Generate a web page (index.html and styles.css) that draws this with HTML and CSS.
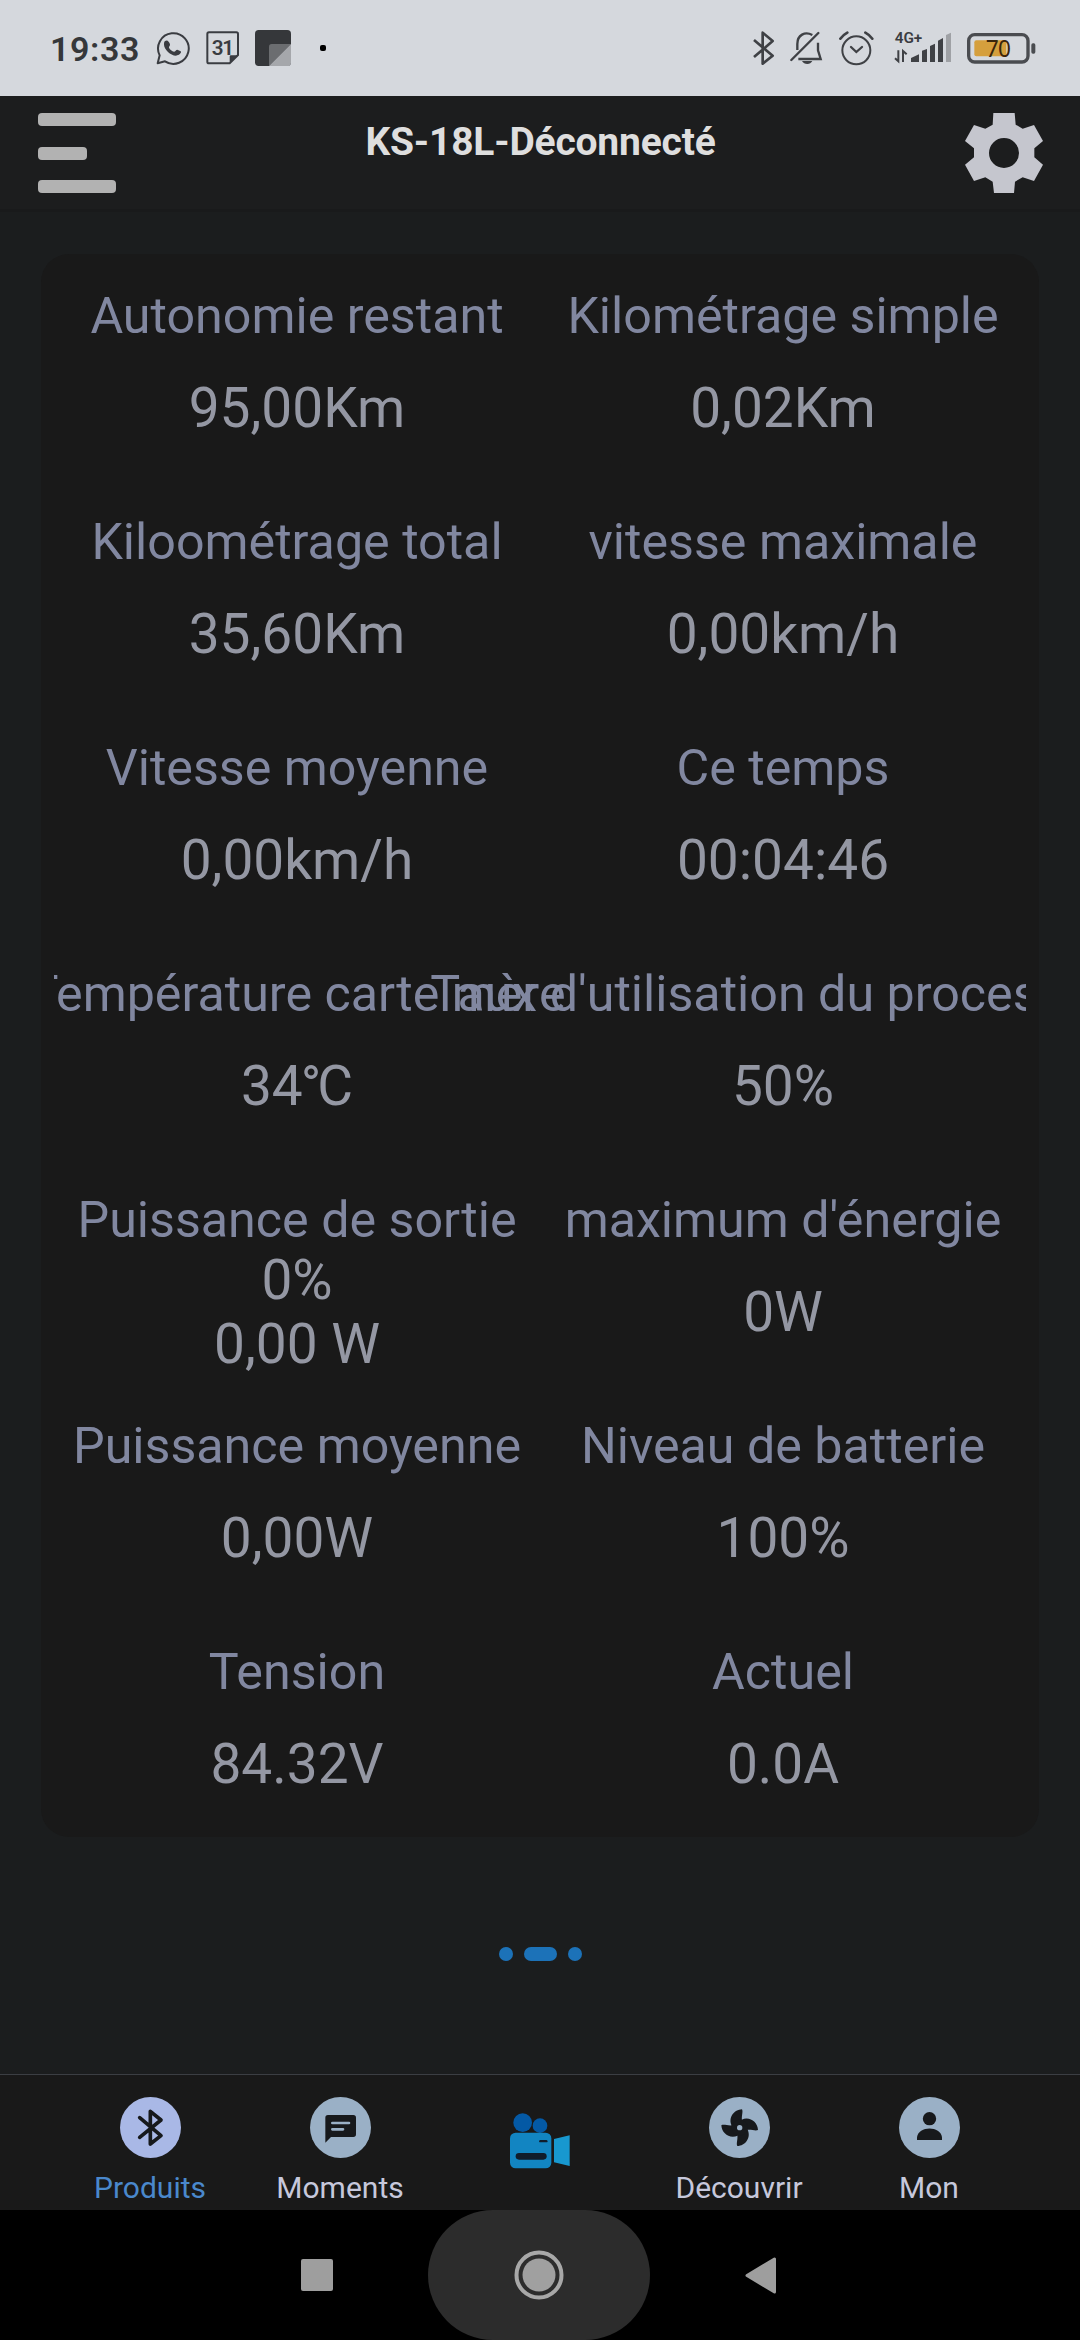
FILE: index.html
```html
<!DOCTYPE html>
<html lang="fr">
<head>
    <meta charset="UTF-8">
    <meta name="viewport" content="width=device-width, initial-scale=1.0">
    <title>KS-18L</title>
    <link rel="stylesheet" href="styles.css">
</head>
<body>
    <!-- Status bar -->
    <div class="status-bar">
        <div class="status-left">
            <span class="clock">19:33</span>
            <svg class="whatsapp" width="34" height="35" viewBox="469 93 102 105">
                <path d="M474 190 L480 166 A46 46 0 1 1 496 184 Z" fill="none" stroke="#3a3c41" stroke-width="6" stroke-linejoin="round"/>
                <path d="M496 123 C503 118 508 124 511 133 C512 138 507 140 508 143 C511 149 517 153 523 155 C527 155 529 149 533 149 L543 154 C547 158 539 166 529 167 C512 166 494 149 493 134 C493 129 493 126 496 123 Z" fill="#3a3c41"/>
            </svg>
            <svg class="calendar" width="34" height="35" viewBox="619 93 102 105">
                <path d="M628 97 H710 Q715 97 715 102 V165 L690 190 H628 Q623 190 623 185 V102 Q623 97 628 97 Z" fill="none" stroke="#3a3c41" stroke-width="6"/>
                <path d="M690 190 V170 Q690 166 694 166 H714 Z" fill="#3a3c41"/>
                <text x="668" y="164" class="calendar-day">31</text>
            </svg>
            <svg class="note" width="36" height="36" viewBox="0 0 108 108">
                <rect width="108" height="108" rx="11" fill="#35373a"/>
                <path d="M42 108 V50 Q42 42 50 42 H108 Z" fill="#6b6d70"/>
                <path d="M42 108 L108 42 V98 Q108 108 98 108 Z" fill="#a5a7ab"/>
            </svg>
            <span class="more-dot"></span>
        </div>
        <div class="status-right">
            <svg width="22" height="35" viewBox="99 92 66 105">
                <path d="M102 119 L158 166 L128 190 V97 L158 122 L102 170" fill="none" stroke="#3f4145" stroke-width="8" stroke-linejoin="round"/>
            </svg>
            <svg class="bell" width="33" height="34" viewBox="210 93 99 102">
                <path d="M277 105 C255 93 232 105 232 132 V150 M294 128 V151 L302 177 H235" fill="none" stroke="#3f4145" stroke-width="7"/>
                <path d="M214 180 L295 99" stroke="#3f4145" stroke-width="7" stroke-linecap="round"/>
                <path d="M246 183 H277 Q272 192 262 192 Q251 192 246 183 Z" fill="#3f4145"/>
            </svg>
            <svg class="alarm" width="35" height="35" viewBox="356 92 105 105">
                <circle cx="408" cy="150" r="42" fill="none" stroke="#3f4145" stroke-width="6"/>
                <path d="M392 140 L408 155 L425 140" fill="none" stroke="#3f4145" stroke-width="7" stroke-linecap="round"/>
                <path d="M360 115 Q368 104 381 97 M435 97 Q448 104 456 115" fill="none" stroke="#3f4145" stroke-width="8" stroke-linecap="round"/>
            </svg>
            <svg class="signal" width="58" height="34" viewBox="522 90 174 102">
                <text x="524" y="129" class="network">4G+</text>
                <path d="M535 151 V184 L525 175 M549 186 V153 L560 163" fill="none" stroke="#3f4145" stroke-width="6"/>
                <path d="M573 174 L597 163 V186 H573 Z M606 152 L621 147 V186 H606 Z M630 138 L645 131 V186 H630 Z M654 122 L669 114 V186 H654 Z" fill="#3f4145"/>
                <path d="M678 105 L693 98 V186 H678 Z" fill="#9fa1a5"/>
            </svg>
            <svg class="battery" width="69" height="31" viewBox="740 98 207 93">
                <rect x="745" y="103" width="178" height="82" rx="18" fill="none" stroke="#4a4c50" stroke-width="10"/>
                <rect x="762" y="120" width="96" height="48" rx="6" fill="#d59f3d"/>
                <rect x="933" y="129" width="12" height="31" rx="5" fill="#4a4c50"/>
                <text x="833" y="170" class="battery-level">70</text>
            </svg>
        </div>
    </div>

    <!-- Header -->
    <div class="header">
        <div class="menu">
            <span></span>
            <span class="short"></span>
            <span></span>
        </div>
        <h1>KS-18L-Déconnecté</h1>
        <svg width="78" height="80" viewBox="735 339 234 240">
            <path fill="#c5c6ce" fill-rule="evenodd" d="M820 339 H884 L887 374 L908 386 L942 375 L969 423 L943 445 V472 L969 494 L942 543 L908 532 L885 545 L882 579 H822 L818 545 L796 532 L762 543 L735 494 L762 472 V445 L735 423 L762 375 L796 386 L818 374 Z M852 414 A45 45 0 1 0 852 504 A45 45 0 1 0 852 414 Z"/>
        </svg>
    </div>

    <!-- Ride data -->
    <div class="content">
        <div class="card">
            <div class="stats">
                <div class="stat"><div class="label">Autonomie restant</div><div class="value">95,00Km</div></div>
                <div class="stat"><div class="label">Kilométrage simple</div><div class="value">0,02Km</div></div>
                <div class="stat"><div class="label">Kiloométrage total</div><div class="value">35,60Km</div></div>
                <div class="stat"><div class="label">vitesse maximale</div><div class="value">0,00km/h</div></div>
                <div class="stat"><div class="label">Vitesse moyenne</div><div class="value">0,00km/h</div></div>
                <div class="stat"><div class="label">Ce temps</div><div class="value">00:04:46</div></div>
                <div class="stat"><div class="label">Température carte mère</div><div class="value">34<span class="degree">°</span>C</div></div>
                <div class="stat"><div class="label">Taux d'utilisation du processeur</div><div class="value">50%</div></div>
                <div class="stat"><div class="label">Puissance de sortie</div><div class="value">0%<br>0,00 W</div></div>
                <div class="stat"><div class="label">maximum d'énergie</div><div class="value">0W</div></div>
                <div class="stat"><div class="label">Puissance moyenne</div><div class="value">0,00W</div></div>
                <div class="stat"><div class="label">Niveau de batterie</div><div class="value">100%</div></div>
                <div class="stat"><div class="label">Tension</div><div class="value">84.32V</div></div>
                <div class="stat"><div class="label">Actuel</div><div class="value">0.0A</div></div>
            </div>
        </div>
        <div class="pager">
            <span></span>
            <span class="current"></span>
            <span></span>
        </div>
    </div>

    <!-- Tabs -->
    <div class="tabs">
        <div class="tab active">
            <svg width="61" height="61" viewBox="0 0 183 183">
                <circle cx="91.5" cy="91.5" r="91.5" fill="#a9b8e6"/>
                <path d="M59 62 L123 116 L91 141 V43 L123 69 L59 121" fill="none" stroke="#17191c" stroke-width="11" stroke-linejoin="round" stroke-linecap="round"/>
            </svg>
            <span>Produits</span>
        </div>
        <div class="tab">
            <svg width="61" height="61" viewBox="0 0 183 183">
                <circle cx="91.5" cy="91.5" r="91.5" fill="#9ab0c6"/>
                <path d="M54 54 H130 Q138 54 138 62 V112 Q138 120 130 120 H63 L46 137 V62 Q46 54 54 54 Z" fill="#17191c"/>
                <path d="M67 78 H117 M67 97 H99" stroke="#9ab0c6" stroke-width="8" stroke-linecap="round"/>
            </svg>
            <span>Moments</span>
        </div>
        <div class="tab">
            <svg class="camera" width="60" height="56" viewBox="0 0 180 168">
                <circle cx="38" cy="29" r="28" fill="#0459a5"/>
                <circle cx="90" cy="38" r="22" fill="#0459a5"/>
                <rect x="0" y="59" width="124" height="107" rx="17" fill="#1285c2"/>
                <path d="M132 78 L179 67 V159 L132 148 Z" fill="#1898cf"/>
                <path d="M91 84.5 H109" stroke="#101d2c" stroke-width="7" stroke-linecap="round"/>
                <path d="M27 130 H100" stroke="#101d2c" stroke-width="20" stroke-linecap="round"/>
            </svg>
        </div>
        <div class="tab">
            <svg width="61" height="61" viewBox="0 0 183 183">
                <circle cx="91.5" cy="91.5" r="91.5" fill="#9ab0c6"/>
                <g fill="#17191c">
                    <path d="M91 92 L68 86 C57 62 75 38 99 37 C103 44 97 57 99 70 Z"/>
                    <path d="M91 92 L68 86 C57 62 75 38 99 37 C103 44 97 57 99 70 Z" transform="rotate(90 92 92)"/>
                    <path d="M91 92 L68 86 C57 62 75 38 99 37 C103 44 97 57 99 70 Z" transform="rotate(180 92 92)"/>
                    <path d="M91 92 L68 86 C57 62 75 38 99 37 C103 44 97 57 99 70 Z" transform="rotate(270 92 92)"/>
                    <circle cx="92" cy="92" r="24"/>
                </g>
                <circle cx="92" cy="92" r="8" fill="#9ab0c6"/>
            </svg>
            <span>Découvrir</span>
        </div>
        <div class="tab">
            <svg width="61" height="61" viewBox="0 0 183 183">
                <circle cx="91.5" cy="91.5" r="91.5" fill="#9ab0c6"/>
                <circle cx="91.5" cy="65" r="20" fill="#17191c"/>
                <path d="M54 129 V121 C58 86 125 86 129 121 V129 Z" fill="#17191c"/>
            </svg>
            <span>Mon</span>
        </div>
    </div>

    <!-- Android navigation -->
    <div class="nav-bar">
        <div class="nav-item"><span class="recents"></span></div>
        <div class="home">
            <svg width="50" height="50" viewBox="0 0 50 50">
                <circle cx="25" cy="25" r="22.5" fill="none" stroke="#a8a8a8" stroke-width="4"/>
                <circle cx="25" cy="25" r="16.5" fill="#a0a0a0"/>
            </svg>
        </div>
        <div class="nav-item">
            <svg width="32" height="37" viewBox="0 0 32 37">
                <path d="M2 18.5 L29.5 2 V35 Z" fill="#9e9e9e" stroke="#9e9e9e" stroke-width="3" stroke-linejoin="round"/>
            </svg>
        </div>
    </div>
</body>
</html>
```
FILE: styles.css
```css
* {
    box-sizing: border-box;
}

body {
    margin: 0;
    width: 1080px;
    height: 2340px;
    display: flex;
    flex-direction: column;
    overflow: hidden;
    background: #1b1d1e;
    font-family: Roboto, "Noto Sans", sans-serif;
}

svg {
    display: block;
    flex-shrink: 0;
}

/* Status bar */
.status-bar {
    height: 96px;
    flex-shrink: 0;
    padding: 0 44px 0 50px;
    display: flex;
    align-items: center;
    justify-content: space-between;
    background: #d5d8dd;
}

.status-left,
.status-right {
    display: flex;
    align-items: center;
}

.clock {
    width: 106px;
    padding-top: 1px;
    font-size: 34px;
    font-weight: 600;
    line-height: 40px;
    letter-spacing: 0.6px;
    color: #35373a;
}

.calendar {
    margin-left: 16px;
}

.note {
    margin-left: 15px;
}

.more-dot {
    width: 6px;
    height: 6px;
    margin-left: 29px;
    border-radius: 2px;
    background: #000;
}

.calendar-day {
    font-size: 62px;
    font-weight: 600;
    text-anchor: middle;
    letter-spacing: -4px;
    fill: #3a3c41;
}

.network {
    font-size: 46px;
    font-weight: 600;
    fill: #3a3c41;
}

.battery-level {
    font-family: "Noto Sans", sans-serif;
    font-size: 68px;
    font-weight: 400;
    text-anchor: middle;
    letter-spacing: -2px;
    fill: #3a250c;
}

.bell {
    margin-left: 15px;
}

.alarm {
    margin-left: 16px;
}

.signal {
    margin-left: 20px;
    margin-top: -2px;
}

.battery {
    margin-left: 15px;
}

/* Header */
.header {
    height: 116px;
    flex-shrink: 0;
    padding: 17px 37px 0 38px;
    display: flex;
    justify-content: space-between;
    border-bottom: 3px solid #191a1b;
    background: #1c1d1e;
}

.header h1 {
    margin: 0;
    padding-top: 6px;
    font-size: 39px;
    font-weight: 700;
    line-height: 46px;
    letter-spacing: -0.2px;
    color: #dedede;
}

.menu {
    width: 78px;
    height: 80px;
    display: flex;
    flex-direction: column;
    justify-content: space-between;
}

.menu span {
    height: 13px;
    border-radius: 4px;
    background: #b2b2b2;
}

.menu .short {
    width: 49px;
}

/* Ride data */
.content {
    flex: 1;
    padding: 42px 41px 0;
}

.card {
    height: 1583px;
    padding: 0 13px;
    border-radius: 28px;
    background: #191919;
}

.stats {
    display: grid;
    grid-template-columns: 1fr 1fr;
    overflow: hidden;
}

.stat {
    height: 226px;
    min-width: 0;
    padding-top: 34px;
    display: flex;
    flex-direction: column;
    align-items: center;
    text-align: center;
}

.label {
    font-size: 50.2px;
    line-height: 56px;
    white-space: nowrap;
    color: #8187a0;
}

.value {
    height: 128px;
    display: flex;
    align-items: center;
    font-size: 55px;
    line-height: 64px;
    white-space: nowrap;
    color: #9497a3;
}

.degree {
    margin: 0 -4px 0 -2px;
}

.pager {
    margin-top: 110px;
    display: flex;
    justify-content: center;
    gap: 11px;
}

.pager span {
    width: 14px;
    height: 14px;
    border-radius: 7px;
    background: #1c72b8;
}

.pager .current {
    width: 33px;
}

/* Tabs */
.tabs {
    height: 136px;
    flex-shrink: 0;
    padding-left: 55px;
    display: grid;
    grid-template-columns: 190px 190px 209px 190px 190px;
    border-top: 1px solid #3b3e43;
    background: #191919;
}

.tab {
    padding-top: 22px;
    display: flex;
    flex-direction: column;
    align-items: center;
    font-size: 30px;
    line-height: 36px;
    color: #c6c8dc;
}

.tab span {
    margin-top: 12px;
}

.active {
    color: #4a88cc;
}

.camera {
    margin-top: 16px;
}

/* Android navigation */
.nav-bar {
    height: 130px;
    flex-shrink: 0;
    padding-right: 2px;
    display: flex;
    align-items: center;
    justify-content: center;
    background: #000;
}

.nav-item {
    width: 222px;
    display: flex;
    justify-content: center;
}

.home {
    width: 222px;
    height: 130px;
    display: flex;
    align-items: center;
    justify-content: center;
    border-radius: 65px;
    background: #2c2c2c;
}

.recents {
    width: 32px;
    height: 32px;
    border-radius: 2px;
    background: #9e9e9e;
}
```
